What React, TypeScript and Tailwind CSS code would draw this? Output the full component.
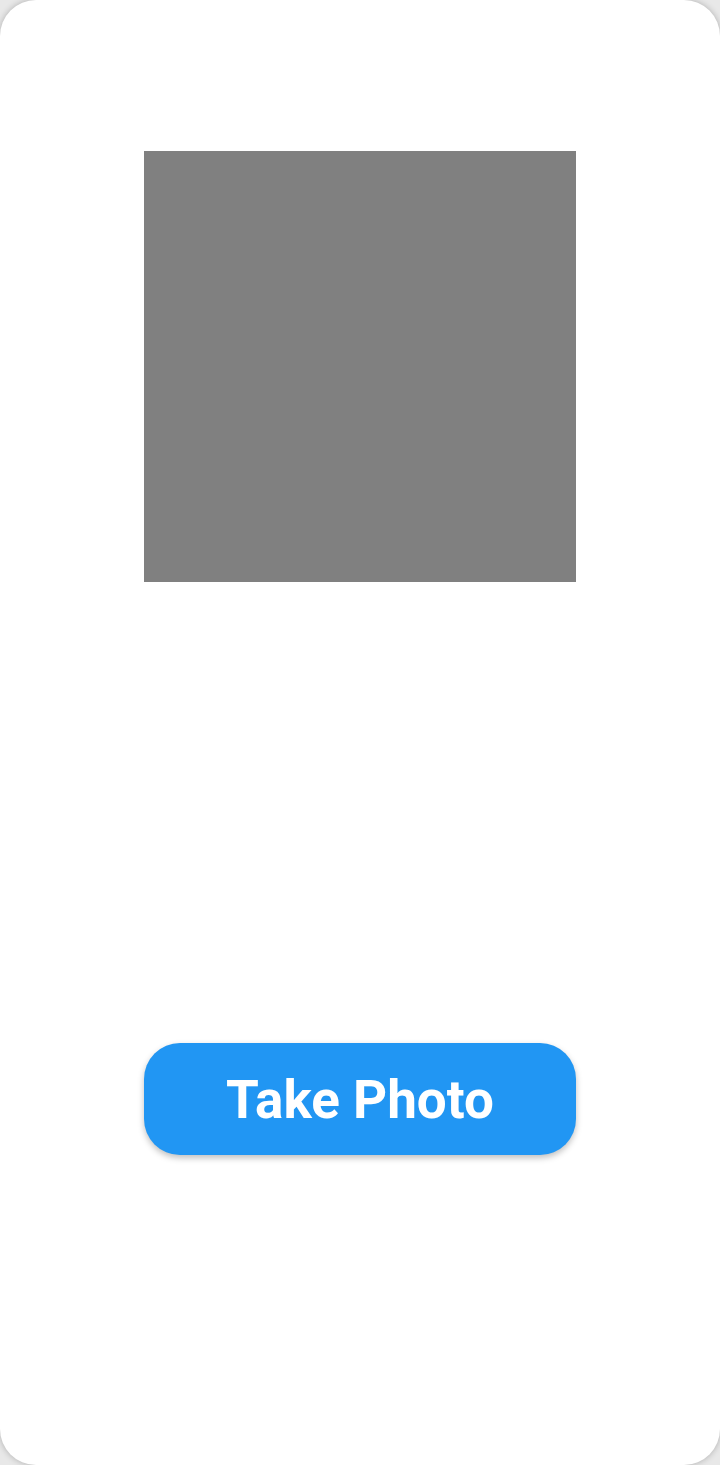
export default function App() {
  return (
    <div className="w-[720px] h-[1465px] bg-[#e8e8e8]">
      <div className="w-full h-full bg-white rounded-[36px] shadow-[0_0_6px_rgba(0,0,0,0.25)] flex flex-col items-center pt-[151px]">
        <div className="w-[432px] h-[431px] bg-[#808080]" />
        <button className="mt-[461px] w-[432px] h-[112px] rounded-[36px] bg-[#2196f3] shadow-[0_3px_6px_rgba(0,0,0,0.25)] text-white font-bold text-[53px] leading-none pt-[2px] font-['Roboto',sans-serif] flex items-center justify-center">
          Take Photo
        </button>
      </div>
    </div>
  );
}
